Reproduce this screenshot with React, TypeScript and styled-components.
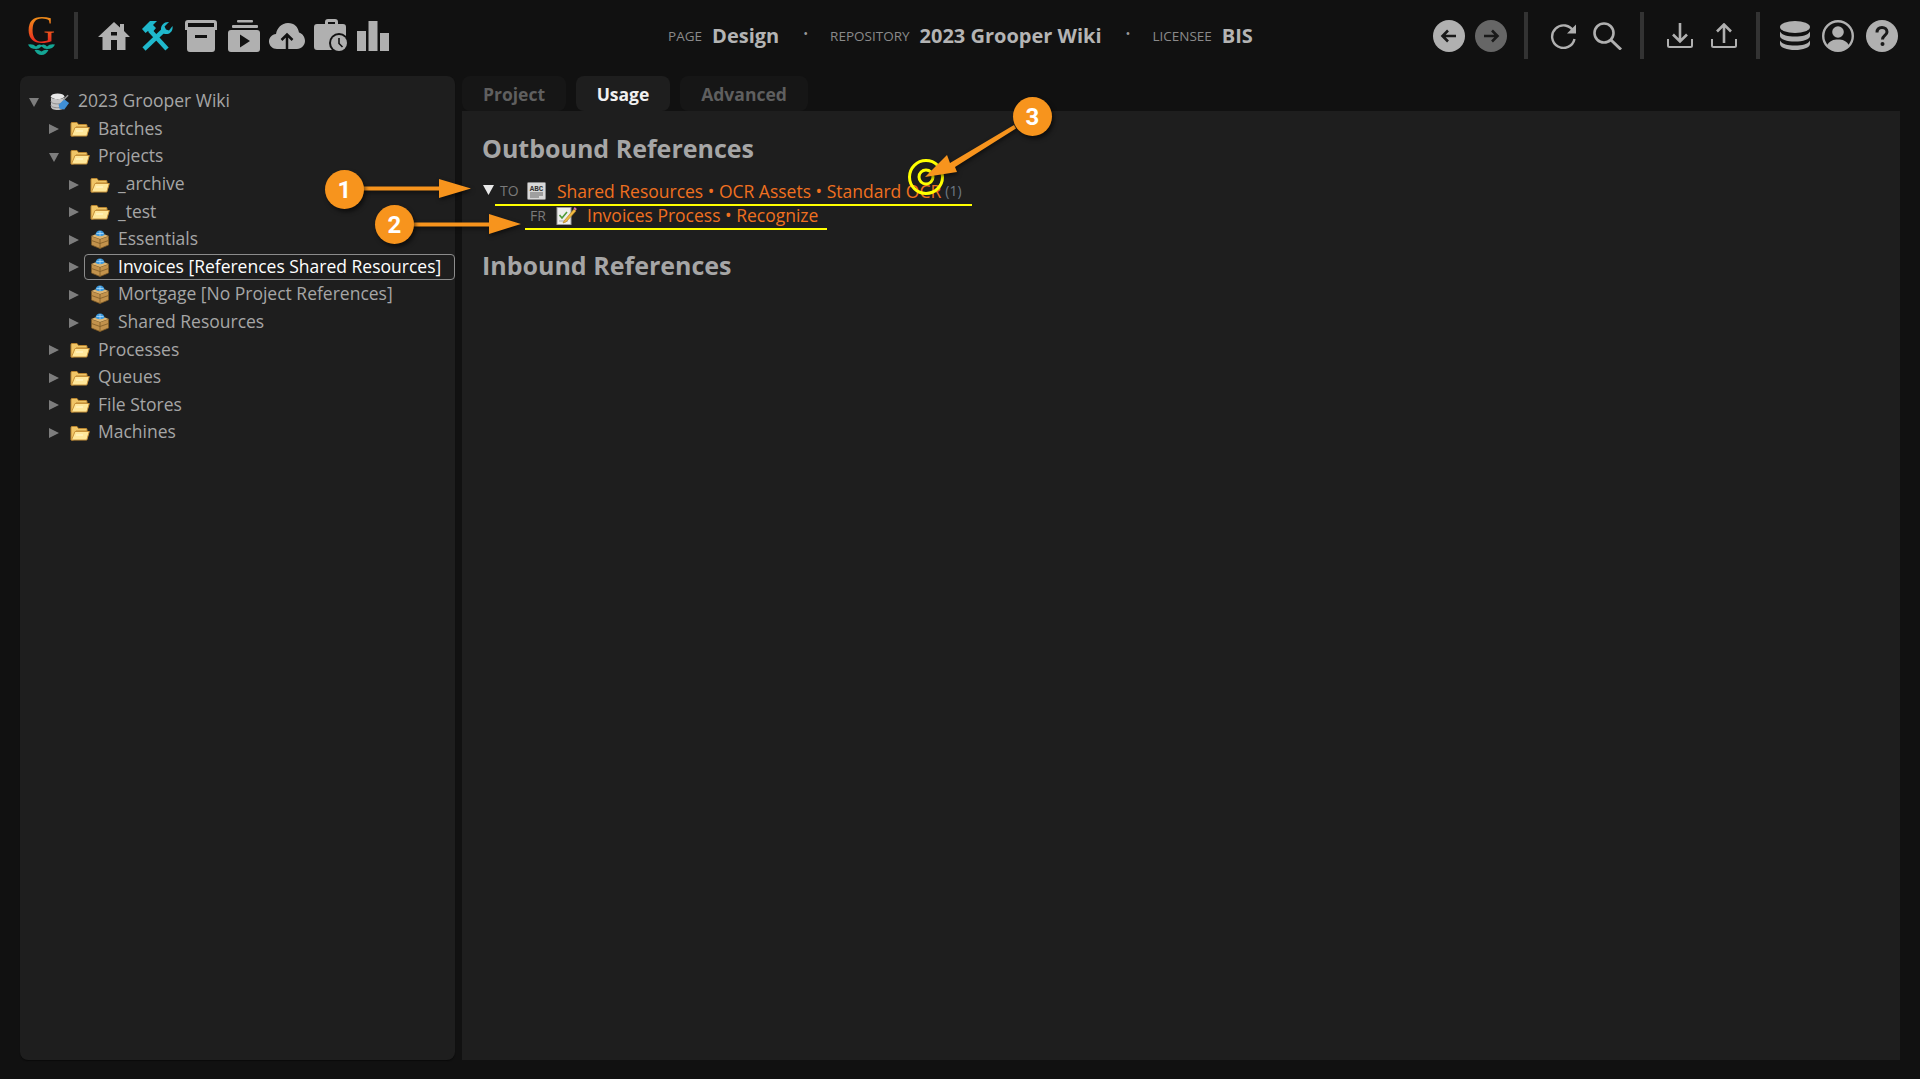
import React from "react";
import styled, { createGlobalStyle } from "styled-components";

const Global = createGlobalStyle`
  html, body { margin: 0; padding: 0; background: #111111; }
  body { font-family: "Open Sans", "Liberation Sans", sans-serif; }
`;

const Page = styled.div`
  position: relative;
  width: 1920px;
  height: 1079px;
  overflow: hidden;
  background: #111111;
  display: flex;
  flex-direction: column;
`;

const TopBar = styled.header`
  height: 76px;
  box-sizing: border-box;
  flex: none;
  display: grid;
  grid-template-columns: 1fr auto 1fr;
  align-items: center;
  padding: 0 22px 5px 27px;
`;

const Group = styled.div<{ $end?: boolean }>`
  display: flex;
  align-items: center;
  justify-content: ${(p) => (p.$end ? "flex-end" : "flex-start")};
`;

const Divider = styled.span<{ $ml: number; $mr: number }>`
  width: 4px;
  height: 47px;
  background: #333333;
  margin: 0 ${(p) => p.$mr}px 0 ${(p) => p.$ml}px;
  flex: none;
`;

const IconSlot = styled.span<{ $w: number; $gap?: number }>`
  width: ${(p) => p.$w}px;
  margin-right: ${(p) => p.$gap ?? 0}px;
  display: flex;
  justify-content: center;
  align-items: center;
  flex: none;
  color: #b0b0b0;
`;

const Logo = styled.div`
  width: 28px;
  display: flex;
  flex-direction: column;
  align-items: center;
  flex: none;
`;

const LogoLetter = styled.span`
  font-family: "Liberation Serif", serif;
  font-size: 39px;
  line-height: 27px;
  height: 27px;
  background: linear-gradient(180deg, #f08a1a 10%, #e8301f 90%);
  -webkit-background-clip: text;
  background-clip: text;
  color: transparent;
`;

const Info = styled.div`
  display: flex;
  align-items: center;
  color: #a9a9a9;
  white-space: nowrap;
  margin-right: 4px;
`;

const InfoLabel = styled.span`
  font-size: 13.5px;
  color: #8a8a8a;
  margin-right: 10px;
`;

const InfoValue = styled.span`
  font-size: 20px;
  font-weight: 700;
  color: #b4b4b4;
`;

const InfoDot = styled.span`
  font-size: 13px;
  color: #9a9a9a;
  margin-left: 24px;
  margin-right: 22px;
  position: relative;
  top: -3px;
`;

const Main = styled.main`
  flex: 1;
  min-height: 0;
  display: flex;
  gap: 7px;
  padding: 0 20px 19px 20px;
`;

const TreePanel = styled.aside`
  width: 435px;
  flex: none;
  background: #1e1e1e;
  border-radius: 8px;
  padding: 12px 0 0 0;
  box-shadow: 0 1px 1px #0a0a0a;
`;

const TreeRow = styled.div<{ $level: number }>`
  height: 27.6px;
  display: flex;
  align-items: center;
  padding-left: ${(p) => 8 + p.$level * 20}px;
  color: #a6a6a6;
  font-size: 17.5px;
  white-space: nowrap;
`;

const Caret = styled.span`
  width: 12px;
  margin-right: 10px;
  display: flex;
  flex: none;
  justify-content: center;
`;

const NodeIcon = styled.span`
  width: 20px;
  flex: none;
  margin-right: 8px;
  display: flex;
  justify-content: center;
`;

const NodeLabel = styled.span`
  padding-bottom: 3px;
`;

const SelectedBox = styled.span`
  display: flex;
  align-items: center;
  width: 371px;
  height: 26px;
  margin-left: -6px;
  padding-left: 5px;
  box-sizing: border-box;
  border: 1px solid #8c8c8c;
  border-radius: 4px;
  color: #ffffff;
`;

const Content = styled.section`
  flex: 1;
  min-width: 0;
  display: flex;
  flex-direction: column;
`;

const Tabs = styled.nav`
  height: 35px;
  flex: none;
  display: flex;
  gap: 10px;
`;

const Tab = styled.div<{ $active?: boolean; $w: number }>`
  width: ${(p) => p.$w}px;
  display: flex;
  align-items: center;
  justify-content: center;
  font-size: 17.5px;
  font-weight: 700;
  border-radius: 8px;
  background: ${(p) => (p.$active ? "#1e1e1e" : "#161616")};
  color: ${(p) => (p.$active ? "#f0f0f0" : "#5f5f5f")};
`;

const Panel = styled.div`
  flex: 1;
  background: #1e1e1e;
  padding: 20px 20px;
`;

const Heading = styled.h2`
  margin: 0;
  font-size: 25px;
  line-height: 34px;
  font-weight: 700;
  color: #a6a6a6;
`;

const RefRow = styled.div<{ $ml: number; $w: number; $h: number }>`
  display: flex;
  align-items: center;
  box-sizing: border-box;
  margin-left: ${(p) => p.$ml}px;
  width: ${(p) => p.$w}px;
  height: ${(p) => p.$h}px;
  padding-bottom: 4px;
  border-bottom: 2px solid #ffff00;
  white-space: nowrap;
`;

const RefCaret = styled.span`
  width: 12px;
  margin-left: -12px;
  display: flex;
  align-self: flex-start;
  margin-top: 3px;
  flex: none;
`;

const RefKind = styled.span<{ $w: number }>`
  width: ${(p) => p.$w}px;
  flex: none;
  font-size: 14px;
  color: #7a7a7a;
  padding-left: 5px;
  box-sizing: border-box;
`;

const RefIcon = styled.span<{ $w: number }>`
  width: ${(p) => p.$w}px;
  flex: none;
  display: flex;
`;

const RefLink = styled.span`
  font-size: 17.5px;
  color: #f07020;
`;

const RefCount = styled.span`
  font-size: 14px;
  color: #6f7a85;
  margin-left: 4px;
`;

const Spacer = styled.div<{ $h: number }>`
  height: ${(p) => p.$h}px;
`;

const Overlay = styled.svg`
  position: absolute;
  left: 0;
  top: 0;
  pointer-events: none;
`;

const Arrows = styled.g`
  fill: #f7941d;
  filter: drop-shadow(1px 2px 2px rgba(0, 0, 0, 0.55));
`;

const Badge = styled.div<{ $x: number; $y: number }>`
  position: absolute;
  left: ${(p) => p.$x}px;
  top: ${(p) => p.$y}px;
  width: 39px;
  height: 39px;
  border-radius: 50%;
  background: #f7941d;
  color: #ffffff;
  font-family: "Roboto", "Liberation Sans", sans-serif;
  font-weight: 700;
  font-size: 24px;
  display: flex;
  align-items: center;
  justify-content: center;
  box-shadow: 2px 3px 4px rgba(0, 0, 0, 0.55);
`;

const G = "#b0b0b0";

const Folder = () => (
  <svg width="20" height="16" viewBox="0 0 20 16">
    <path d="M1 15V2.500Q1 1.500 2 1.500H7L8.500 3.500H16Q17 3.500 17 4.500V6H6L3.500 15Z" fill="#f0c566" stroke="#b98530" strokeWidth="1" />
    <path d="M1.500 15 5 6.500H19.300L16.800 15Z" fill="#ffe79a" stroke="#c8923a" strokeWidth="1" />
    <path d="M6 10H13" stroke="#fff7d2" strokeWidth="1" />
  </svg>
);

const Box = () => (
  <svg width="20" height="19" viewBox="0 0 20 19">
    <path d="M1.500 6 10 9 18.500 6V15L10 18.500 1.500 15Z" fill="#c2924c" stroke="#7d5a26" strokeWidth="0.800" />
    <path d="M1.500 6 5 4.500H15L18.500 6 10 9Z" fill="#dfb672" />
    <path d="M10 9V18.500M1.500 10.500 10 13.500 18.500 10.500" stroke="#7d5a26" strokeWidth="0.800" fill="none" />
    <path d="M5.500 5A4.500 4.500 0 0 1 14.500 5Q10 7.500 5.500 5Z" fill="#3d9ade" />
    <path d="M6.500 3.500h7M10 1v5" stroke="#bfe4fa" strokeWidth="0.700" />
  </svg>
);

const Repo = () => (
  <svg width="21" height="20" viewBox="0 0 21 20">
    <ellipse cx="8" cy="4" rx="7" ry="3" fill="#e8e8e8" />
    <path d="M1 4V15C1 17 4 18.500 8 18.500S15 17 15 15V4C15 6 12 7 8 7S1 6 1 4Z" fill="#c4c4c4" />
    <path d="M1 9C1 11 4 12 8 12S15 11 15 9M1 13C1 15 4 16 8 16S15 15 15 13" stroke="#8a8a8a" fill="none" />
    <path d="M9 13 15 7 20 11 15 18 10 17Z" fill="#3f8fd6" />
    <path d="M14 8 19 3" stroke="#9a9a9a" strokeWidth="1.500" />
  </svg>
);

const CaretIcon = ({ open, color = "#7d7d7d", size = 10 }: { open?: boolean; color?: string; size?: number }) => (
  <svg width={size} height={size} viewBox="0 0 10 10">
    <path d={open ? "M0 1H10L5 10Z" : "M0 0 10 5 0 10Z"} fill={color} />
  </svg>
);

const OcrIcon = () => (
  <svg width="19" height="18" viewBox="0 0 19 18">
    <rect x="0.500" y="0.500" width="18" height="17" rx="1" fill="#d8d8d8" stroke="#8a8a8a" />
    <text x="9.500" y="8.500" textAnchor="middle" fontFamily="Liberation Mono, monospace" fontWeight="700" fontSize="7.500" fill="#333">ABC</text>
    <path d="M3 11h13M3 13h13M3 15h9" stroke="#666" strokeWidth="1" />
  </svg>
);

const NoteIcon = () => (
  <svg width="21" height="19" viewBox="0 0 21 19">
    <rect x="1" y="1.500" width="14" height="17" fill="#eeeeee" stroke="#9a9a9a" />
    <path d="M3.500 9 6 12 11 6" stroke="#4f9a3a" strokeWidth="1.600" fill="none" />
    <path d="M3 15h9" stroke="#aaa" />
    <path d="M8 15 18 3l2 2-10 11-3 1Z" fill="#f0b840" stroke="#a87c24" strokeWidth="0.600" />
    <path d="M17.500 2.500 18.800 1l2 2-1 1.500Z" fill="#d874b0" />
  </svg>
);

const HomeIcon = () => (
  <svg width="32" height="28" viewBox="0 0 32 28">
    <path d="M16 0 22 5.500V2H26V9L32 15H27.500V28H19V18H13V28H4.500V15H0Z" fill={G} />
    <rect x="13" y="10" width="6" height="3.500" fill="#111" />
  </svg>
);

const ToolsIcon = () => (
  <svg width="32" height="30" viewBox="0 0 32 30">
    <g stroke="#1fb8cc" fill="none" strokeLinecap="butt">
      <path d="M26 28 9 9.500" strokeWidth="4.500" />
      <path d="M3 28 23 9" strokeWidth="4.500" />
    </g>
    <path d="M1 8 9 0H16L12 4 15 7 10 13 7 10 4.500 12Z" fill="#1fb8cc" />
    <path d="M20.500 11.500C18.500 6 22 0.500 28 1L23.500 5.500 25 8.500 28 9.500 31.500 5C32.500 11 27 14.500 22.500 12.500Z" fill="#1fb8cc" />
  </svg>
);

const ArchiveIcon = () => (
  <svg width="32" height="32" viewBox="0 0 32 32">
    <path d="M3 0H29Q32 0 32 3V10H30V29Q30 32 27 32H5Q2 32 2 29V10H0V3Q0 0 3 0ZM3 3V7H29V3Z" fill={G} fillRule="evenodd" />
    <rect x="10" y="15" width="12" height="3" fill="#111" />
  </svg>
);

const PlayStackIcon = () => (
  <svg width="32" height="32" viewBox="0 0 32 32">
    <rect x="9" y="0" width="16" height="2.500" rx="1" fill={G} />
    <rect x="4" y="5" width="26" height="3" rx="1" fill={G} />
    <path d="M3 10H29Q32 10 32 13V29Q32 32 29 32H3Q0 32 0 29V13Q0 10 3 10Z" fill={G} />
    <path d="M12 14.500 22 21 12 27.500Z" fill="#111" />
  </svg>
);

const CloudIcon = () => (
  <svg width="36" height="26" viewBox="0 0 36 26">
    <path d="M8 26C3.500 26 0 22.500 0 18.500S3 11.500 7 11C8 5 12.500 0 19 0S29 4 30 9.500C33.500 10.500 36 14 36 18S32.500 26 28 26Z" fill={G} />
    <path d="M18 26V12M12.500 17 18 11.500 23.500 17" stroke="#111" strokeWidth="2.500" fill="none" />
  </svg>
);

const CaseIcon = () => (
  <svg width="35" height="34" viewBox="0 0 35 34">
    <path d="M11 5V3Q11 0 14 0H21Q24 0 24 3V5H29Q32 5 32 8V17H20V31H3Q0 31 0 28V8Q0 5 3 5ZM14 3V5H21V3Z" fill={G} fillRule="evenodd" />
    <circle cx="25" cy="24" r="10" fill="#111" />
    <circle cx="25" cy="24" r="8" fill={G} />
    <path d="M25 19V24.500L28.500 28" stroke="#111" strokeWidth="1.600" fill="none" />
  </svg>
);

const BarsIcon = () => (
  <svg width="32" height="30" viewBox="0 0 32 30">
    <rect x="0" y="10" width="9" height="20" fill={G} />
    <rect x="11.500" y="0" width="9" height="30" fill={G} />
    <rect x="23" y="12" width="9" height="18" fill={G} />
  </svg>
);

const ArrowCircle = ({ dir, bg }: { dir: "l" | "r"; bg: string }) => (
  <svg width="32" height="32" viewBox="0 0 32 32">
    <circle cx="16" cy="16" r="16" fill={bg} />
    <path d={dir === "l" ? "M23 16H10M15 10.500 9.500 16 15 21.500" : "M9 16H22M17 10.500 22.500 16 17 21.500"} stroke="#1a1a1a" strokeWidth="2.600" fill="none" />
  </svg>
);

const RefreshIcon = () => (
  <svg width="28" height="26" viewBox="0 0 28 26">
    <path d="M23.500 8.500A11.300 11.300 0 1 0 24.500 16" stroke={G} strokeWidth="2.400" fill="none" />
    <path d="M26 1.500V10.500H17Z" fill={G} />
  </svg>
);

const SearchIcon = () => (
  <svg width="29" height="28" viewBox="0 0 29 28">
    <circle cx="11" cy="11" r="9.500" stroke={G} strokeWidth="2.600" fill="none" />
    <path d="M18 18 28 27.500" stroke={G} strokeWidth="3" />
  </svg>
);

const TrayArrow = ({ up }: { up?: boolean }) => (
  <svg width="26" height="25" viewBox="0 0 26 25">
    <path d="M1 16V22.500Q1 24 2.500 24H23.500Q25 24 25 22.500V16" stroke={G} strokeWidth="2" fill="none" />
    <path d={up ? "M13 20V2M6 8.500 13 1.500 20 8.500" : "M13 0V18M6 11.500 13 18.500 20 11.500"} stroke={G} strokeWidth="2.600" fill="none" />
  </svg>
);

const DbIcon = () => (
  <svg width="30" height="29" viewBox="0 0 30 29">
    <ellipse cx="15" cy="6" rx="15" ry="6" fill={G} />
    <path d="M0 10.500C2 14.500 8 15.500 15 15.500S28 14.500 30 10.500V15C30 18.500 23 20.500 15 20.500S0 18.500 0 15Z" fill={G} />
    <path d="M0 19.500C2 23.500 8 24.500 15 24.500S28 23.500 30 19.500V23C30 26.500 23 29 15 29S0 26.500 0 23Z" fill={G} />
  </svg>
);

const UserIcon = () => (
  <svg width="32" height="32" viewBox="0 0 32 32">
    <circle cx="16" cy="16" r="14.800" stroke={G} strokeWidth="2.400" fill="none" />
    <circle cx="16" cy="12" r="5.800" fill={G} />
    <path d="M5 25.500C7.500 20.500 11.500 19.500 16 19.500S24.500 20.500 27 25.500C24 29 20 30.500 16 30.500S8 29 5 25.500Z" fill={G} />
  </svg>
);

const HelpIcon = () => (
  <svg width="32" height="32" viewBox="0 0 32 32">
    <circle cx="16" cy="16" r="16" fill={G} />
    <path d="M11 12.500C11 9 13.200 7.500 16 7.500S21 9.200 21 12C21 15.500 16.500 15.500 16.500 19.500" stroke="#1a1a1a" strokeWidth="3" fill="none" />
    <circle cx="16.500" cy="24" r="2" fill="#1a1a1a" />
  </svg>
);

const WaterSvg = styled.svg`
  margin-top: 1px;
`;

const LogoWater = () => (
  <WaterSvg width="27" height="11" viewBox="0 0 27 11">
    <path d="M0 0.500Q5 -0.500 8 2.500 10.500 -0.500 13.500 1 16.500 -0.500 19 2.500 22 -0.500 27 0.500 25 5 19 5 16 5 13.500 2.500 11 5 8 5 2 5 0 0.500Z" fill="#14a594" />
    <path d="M6.500 6Q10.500 5 13.500 7.500 16.500 5 20.500 6 18 11 13.500 11 9 11 6.500 6Z" fill="#14a594" />
  </WaterSvg>
);

type Node = { label: string; level: number; open?: boolean; kind: "repo" | "folder" | "box"; selected?: boolean };

const nodes: Node[] = [
  { label: "2023 Grooper Wiki", level: 0, open: true, kind: "repo" },
  { label: "Batches", level: 1, kind: "folder" },
  { label: "Projects", level: 1, open: true, kind: "folder" },
  { label: "_archive", level: 2, kind: "folder" },
  { label: "_test", level: 2, kind: "folder" },
  { label: "Essentials", level: 2, kind: "box" },
  { label: "Invoices [References Shared Resources]", level: 2, kind: "box", selected: true },
  { label: "Mortgage [No Project References]", level: 2, kind: "box" },
  { label: "Shared Resources", level: 2, kind: "box" },
  { label: "Processes", level: 1, kind: "folder" },
  { label: "Queues", level: 1, kind: "folder" },
  { label: "File Stores", level: 1, kind: "folder" },
  { label: "Machines", level: 1, kind: "folder" },
];

const kindIcon = { repo: <Repo />, folder: <Folder />, box: <Box /> };

export default function App() {
  return (
    <Page>
      <Global />
      <TopBar>
        <Group>
          <Logo>
            <LogoLetter>G</LogoLetter>
            <LogoWater />
          </Logo>
          <Divider $ml={19} $mr={20} />
          <IconSlot $w={32} $gap={11}><HomeIcon /></IconSlot>
          <IconSlot $w={32} $gap={12}><ToolsIcon /></IconSlot>
          <IconSlot $w={32} $gap={11}><ArchiveIcon /></IconSlot>
          <IconSlot $w={32} $gap={9}><PlayStackIcon /></IconSlot>
          <IconSlot $w={36} $gap={9}><CloudIcon /></IconSlot>
          <IconSlot $w={35} $gap={8}><CaseIcon /></IconSlot>
          <IconSlot $w={32}><BarsIcon /></IconSlot>
        </Group>
        <Info>
          <InfoLabel>PAGE</InfoLabel>
          <InfoValue>Design</InfoValue>
          <InfoDot>•</InfoDot>
          <InfoLabel>REPOSITORY</InfoLabel>
          <InfoValue>2023 Grooper Wiki</InfoValue>
          <InfoDot>•</InfoDot>
          <InfoLabel>LICENSEE</InfoLabel>
          <InfoValue>BIS</InfoValue>
        </Info>
        <Group $end>
          <IconSlot $w={32} $gap={10}><ArrowCircle dir="l" bg="#b0b0b0" /></IconSlot>
          <IconSlot $w={32}><ArrowCircle dir="r" bg="#666666" /></IconSlot>
          <Divider $ml={17} $mr={22} />
          <IconSlot $w={28} $gap={15}><RefreshIcon /></IconSlot>
          <IconSlot $w={29}><SearchIcon /></IconSlot>
          <Divider $ml={18} $mr={23} />
          <IconSlot $w={26} $gap={18}><TrayArrow /></IconSlot>
          <IconSlot $w={26}><TrayArrow up /></IconSlot>
          <Divider $ml={19} $mr={20} />
          <IconSlot $w={30} $gap={12}><DbIcon /></IconSlot>
          <IconSlot $w={32} $gap={12}><UserIcon /></IconSlot>
          <IconSlot $w={32}><HelpIcon /></IconSlot>
        </Group>
      </TopBar>
      <Main>
        <TreePanel>
          {nodes.map((n) => (
            <TreeRow key={n.label} $level={n.level}>
              <Caret><CaretIcon open={n.open} /></Caret>
              {n.selected ? (
                <SelectedBox>
                  <NodeIcon>{kindIcon[n.kind]}</NodeIcon>
                  <NodeLabel>{n.label}</NodeLabel>
                </SelectedBox>
              ) : (
                <>
                  <NodeIcon>{kindIcon[n.kind]}</NodeIcon>
                  <NodeLabel>{n.label}</NodeLabel>
                </>
              )}
            </TreeRow>
          ))}
        </TreePanel>
        <Content>
          <Tabs>
            <Tab $w={104}>Project</Tab>
            <Tab $w={94} $active>Usage</Tab>
            <Tab $w={128}>Advanced</Tab>
          </Tabs>
          <Panel>
            <Heading>Outbound References</Heading>
            <Spacer $h={16} />
            <RefRow $ml={13} $w={477} $h={25}>
              <RefCaret><CaretIcon open color="#e8e8e8" size={11} /></RefCaret>
              <RefKind $w={32}>TO</RefKind>
              <RefIcon $w={30}><OcrIcon /></RefIcon>
              <RefLink>Shared Resources • OCR Assets • Standard OCR</RefLink>
              <RefCount>(1)</RefCount>
            </RefRow>
            <RefRow $ml={43} $w={302} $h={24}>
              <RefKind $w={31}>FR</RefKind>
              <RefIcon $w={31}><NoteIcon /></RefIcon>
              <RefLink>Invoices Process • Recognize</RefLink>
            </RefRow>
            <Spacer $h={18} />
            <Heading>Inbound References</Heading>
          </Panel>
        </Content>
      </Main>

      <Overlay width="1920" height="1079" viewBox="0 0 1920 1079">
        <circle cx="926" cy="177" r="16.500" fill="none" stroke="#ffff00" strokeWidth="3" />
        <circle cx="926" cy="177" r="7" fill="none" stroke="#ffff00" strokeWidth="3" />
        <Arrows>
          <path d="M345 186.500H439V179L471 188.500 439 198V190.500H345Z" />
          <path d="M395 222.500H489V214L521 224 489 234V226.500H395Z" />
          <path d="M1014 125 1016 128.500 955 167 957 172 925 177 947 155 950 163Z" />
        </Arrows>
      </Overlay>
      <Badge $x={325} $y={170}>1</Badge>
      <Badge $x={375} $y={205}>2</Badge>
      <Badge $x={1013} $y={97}>3</Badge>
    </Page>
  );
}
